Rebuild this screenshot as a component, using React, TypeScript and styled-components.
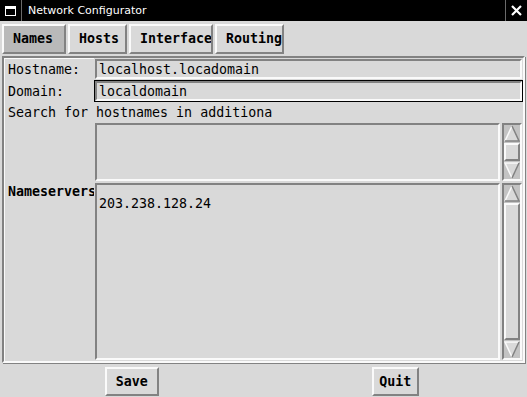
import React from "react";
import styled, { createGlobalStyle } from "styled-components";

const BG = "#d9d9d9";
const DARK = "#828282";
const LIGHT = "#fafafa";

const GlobalStyle = createGlobalStyle`
  html, body {
    margin: 0;
    padding: 0;
    background: ${BG};
  }
  body {
    font-family: "DejaVu Sans Mono", "Liberation Mono", monospace;
  }
`;

const Window = styled.div`
  width: 527px;
  height: 397px;
  display: flex;
  flex-direction: column;
  background: ${BG};
  color: #000;
  font-size: 13.3px;
  overflow: hidden;
`;

const TitleBar = styled.div`
  height: 21px;
  flex-shrink: 0;
  background: #000;
  display: flex;
  align-items: stretch;
`;

const TitleBox = styled.div<{ $side: "left" | "right" }>`
  width: 21px;
  display: flex;
  align-items: center;
  justify-content: center;
  ${(p) => (p.$side === "left" ? `border-right: 1px solid #6a6a6a;` : `border-left: 1px solid #6a6a6a;`)}
`;

const TitleText = styled.div`
  flex: 1;
  display: flex;
  align-items: center;
  padding-left: 6px;
  color: #fff;
  font-family: "DejaVu Sans", "Liberation Sans", sans-serif;
  font-size: 11px;
`;

const TabBar = styled.div`
  height: 35px;
  flex-shrink: 0;
  display: flex;
  align-items: flex-start;
  gap: 2px;
  padding: 3px 2px 0 2px;
  box-sizing: border-box;
`;

const Tab = styled.div<{ $width: number; $active?: boolean }>`
  width: ${(p) => p.$width}px;
  height: 30px;
  box-sizing: border-box;
  border: 2px solid;
  border-color: ${LIGHT} ${DARK} ${DARK} ${LIGHT};
  background: ${(p) => (p.$active ? "#b9b9b9" : BG)};
  font-weight: bold;
  padding-left: 9px;
  line-height: 25px;
  white-space: nowrap;
  overflow: hidden;
`;

const Panel = styled.div`
  flex: 1;
  margin: 0 2px;
  border: 2px solid;
  border-color: ${DARK} ${LIGHT} ${LIGHT} ${DARK};
  box-shadow: inset 1px 1px 0 ${LIGHT}, 1px 1px 0 ${DARK};
  display: grid;
  grid-template-columns: 86px 1fr;
  grid-template-rows: 22px 22px 20px 60px 1fr;
  padding-left: 4px;
  min-height: 0;
`;

const Label = styled.div<{ $bold?: boolean }>`
  display: flex;
  align-items: ${(p) => (p.$bold ? "flex-start" : "center")};
  padding-top: ${(p) => (p.$bold ? "2px" : "0")};
  font-weight: ${(p) => (p.$bold ? "bold" : "normal")};
  white-space: nowrap;
`;

const WideLabel = styled.div`
  grid-column: 1 / 3;
  display: flex;
  align-items: center;
  white-space: nowrap;
`;

const Entry = styled.div<{ $focused?: boolean }>`
  border: 1px solid ${(p) => (p.$focused ? "#000" : BG)};
  display: flex;
`;

const EntryInner = styled.div`
  flex: 1;
  border: 2px solid;
  border-color: ${DARK} ${LIGHT} ${LIGHT} ${DARK};
  padding-left: 2px;
  display: flex;
  align-items: center;
  white-space: nowrap;
  overflow: hidden;
`;

const ListRow = styled.div`
  display: flex;
  min-height: 0;
`;

const ListBox = styled.div`
  flex: 1;
  border: 1px solid ${BG};
  display: flex;
`;

const ListInner = styled.div`
  flex: 1;
  border: 2px solid;
  border-color: ${DARK} ${LIGHT} ${LIGHT} ${DARK};
  padding: 11px 2px 0 2px;
  line-height: 16px;
`;

const Scrollbar = styled.div`
  width: 22px;
  box-sizing: border-box;
  border: 1px solid ${BG};
  display: flex;
`;

const Trough = styled.div`
  flex: 1;
  border: 2px solid;
  border-color: ${DARK} ${LIGHT} ${LIGHT} ${DARK};
  background: #c3c3c3;
  display: flex;
  flex-direction: column;
`;

const ArrowBox = styled.div`
  height: 17px;
  flex-shrink: 0;
  display: flex;
`;

const Slider = styled.div`
  flex: 1;
  margin: 1px 0;
  border: 2px solid;
  border-color: ${LIGHT} ${DARK} ${DARK} ${LIGHT};
  background: ${BG};
`;

const ButtonBar = styled.div`
  height: 34px;
  flex-shrink: 0;
  display: grid;
  grid-template-columns: 1fr 1fr;
  align-items: center;
  justify-items: center;
`;

const Button = styled.div<{ $width: number }>`
  width: ${(p) => p.$width}px;
  height: 29px;
  margin-top: 2px;
  box-sizing: border-box;
  border: 2px solid;
  border-color: ${LIGHT} ${DARK} ${DARK} ${LIGHT};
  display: flex;
  align-items: center;
  justify-content: center;
  font-weight: bold;
`;

const Arrow = ({ up }: { up: boolean }) => (
  <svg width="16" height="17" viewBox="0 0 16 17">
    {up ? (
      <>
        <polygon points="8,1 15,16 1,16" fill={BG} />
        <polyline points="1,16 8,1" fill="none" stroke={LIGHT} strokeWidth="1.5" />
        <polyline points="8,1 15,16 1,16" fill="none" stroke={DARK} strokeWidth="1.5" />
      </>
    ) : (
      <>
        <polygon points="1,1 15,1 8,16" fill={BG} />
        <polyline points="8,16 1,1 15,1" fill="none" stroke={LIGHT} strokeWidth="1.5" />
        <polyline points="15,1 8,16" fill="none" stroke={DARK} strokeWidth="1.5" />
      </>
    )}
  </svg>
);

const ScrollBar = () => (
  <Scrollbar>
    <Trough>
      <ArrowBox>
        <Arrow up />
      </ArrowBox>
      <Slider />
      <ArrowBox>
        <Arrow up={false} />
      </ArrowBox>
    </Trough>
  </Scrollbar>
);

export default function App() {
  return (
    <>
      <GlobalStyle />
      <Window>
        <TitleBar>
          <TitleBox $side="left">
            <svg width="11" height="10" viewBox="0 0 11 10">
              <rect x="0.5" y="0.5" width="10" height="9" fill="none" stroke="#fff" />
              <rect x="0" y="0" width="11" height="3" fill="#fff" />
            </svg>
          </TitleBox>
          <TitleText>Network Configurator</TitleText>
          <TitleBox $side="right">
            <svg width="13" height="13" viewBox="0 0 13 13">
              <path d="M2 2 L11 11 M11 2 L2 11" stroke="#fff" strokeWidth="2.2" />
            </svg>
          </TitleBox>
        </TitleBar>
        <TabBar>
          <Tab $width={64} $active>
            Names
          </Tab>
          <Tab $width={59}>Hosts</Tab>
          <Tab $width={84}>Interface</Tab>
          <Tab $width={69}>Routing</Tab>
        </TabBar>
        <Panel>
          <Label>Hostname:</Label>
          <Entry>
            <EntryInner>localhost.locadomain</EntryInner>
          </Entry>
          <Label>Domain:</Label>
          <Entry $focused>
            <EntryInner>localdomain</EntryInner>
          </Entry>
          <WideLabel>Search for hostnames in additiona</WideLabel>
          <Label />
          <ListRow>
            <ListBox>
              <ListInner />
            </ListBox>
            <ScrollBar />
          </ListRow>
          <Label $bold>Nameservers</Label>
          <ListRow>
            <ListBox>
              <ListInner>203.238.128.24</ListInner>
            </ListBox>
            <ScrollBar />
          </ListRow>
        </Panel>
        <ButtonBar>
          <Button $width={54}>Save</Button>
          <Button $width={47}>Quit</Button>
        </ButtonBar>
      </Window>
    </>
  );
}
